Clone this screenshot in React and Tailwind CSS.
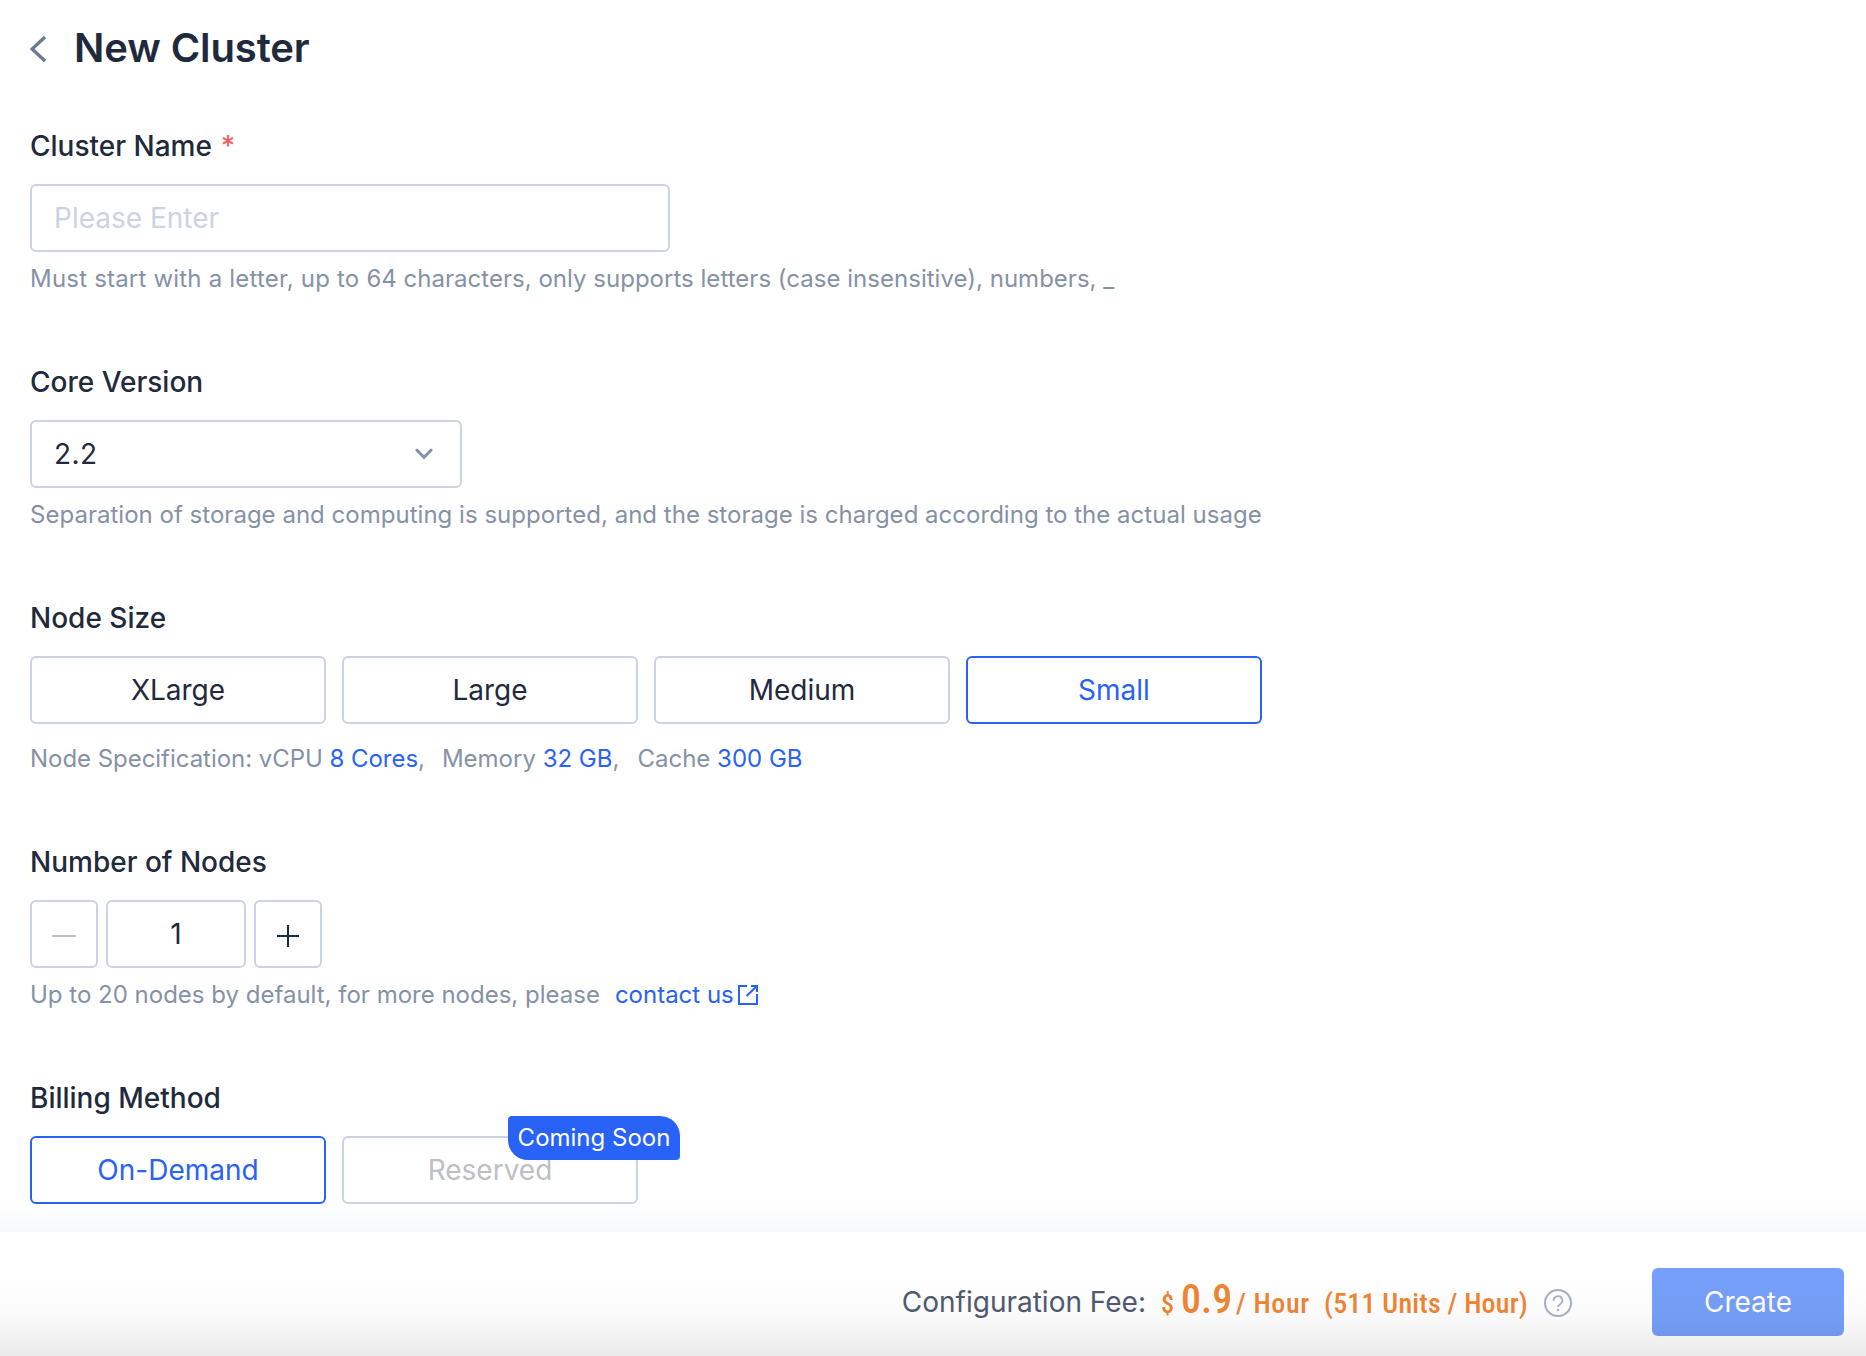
import React from "react";

function Field({ label, required, children, hint, gap = "mt-[12px]" }) {
  return (
    <section>
      <h2 className="flex h-[32px] items-center text-[28px] font-medium text-[#1f2a3d]">
        <span>{label}</span>
        {required && <span className="ml-[9px] font-normal text-[#f15a5a]">*</span>}
      </h2>
      <div className="mt-[22px] flex">{children}</div>
      {hint && (
        <div className={`flex h-[30px] items-center whitespace-pre text-[24px] text-[#8592a6] ${gap}`}>
          {hint}
        </div>
      )}
    </section>
  );
}

const box = "flex h-[68px] items-center rounded-[6px] border-2 text-[28px]";

function Option({ children, active, disabled }) {
  const tone = active
    ? "border-[#2962f6] text-[#2962f6]"
    : disabled
      ? "border-[#cbd3e2] text-[#bdbfc4]"
      : "border-[#cbd3e2] text-[#1f2a3d]";
  return <button className={`${box} w-[296px] justify-center ${tone}`}>{children}</button>;
}

function Value({ children }) {
  return <span className="text-[#2962f6]">{children}</span>;
}

export default function App() {
  return (
    <div className="flex h-[1356px] w-[1866px] flex-col overflow-hidden bg-white font-['Inter',sans-serif]">
      <header className="flex h-[96px] items-center pl-[30px]">
        <svg className="mt-[1px] h-[28px] w-[17px]" viewBox="0 0 17 28" fill="none" stroke="#6b7a8f" strokeWidth="3.2">
          <path d="M15 2 2.200 14 15 26" />
        </svg>
        <h1 className="ml-[27px] text-[40px] font-semibold tracking-[-0.1px] text-[#1f2a3d]">New Cluster</h1>
      </header>

      <main className="flex h-[1136px] flex-col px-[30px] pt-[34px]">
        <div className="h-[236px]">
          <Field
            label="Cluster Name"
            required
            hint={
              <>
                <span className="tracking-[0.2px]">Must start with a letter, up to </span>
                <span className="tracking-[0.02px]">64 characters, only supports letters (case insensitive), numbers, _</span>
              </>
            }
          >
            <div className={`${box} w-[640px] border-[#cbd3e2] px-[22px] text-[#cbd3e2]`}>Please Enter</div>
          </Field>
        </div>
        <div className="h-[236px]">
          <Field
            label="Core Version"
            hint={
              <span className="tracking-[0.02px]">
                Separation of storage and computing is supported, and the storage is charged according to the actual usage
              </span>
            }
          >
            <div className={`${box} w-[432px] justify-between border-[#cbd3e2] pr-[27px] pl-[22px] text-[#1f2a3d]`}>
              <span className="tracking-[0.4px]">2.2</span>
              <svg className="h-[12px] w-[18px]" viewBox="0 0 18 12" fill="none" stroke="#8592a6" strokeWidth="3" strokeLinecap="round">
                <path d="M2 2.200l7 7.200 7-7.200" />
              </svg>
            </div>
          </Field>
        </div>
        <div className="h-[244px]">
          <Field
            label="Node Size"
            gap="mt-[20px]"
            hint={
              <>
                <span className="tracking-[-0.04px]">
                  Node Specification: vCPU <Value>8 Cores</Value>,
                </span>
                <span className="ml-[17px]">
                  Memory <Value>32 GB</Value>,
                </span>
                <span className="ml-[18px]">
                  Cache <Value>300 GB</Value>
                </span>
              </>
            }
          >
            <div className="flex gap-4">
              <Option>XLarge</Option>
              <Option>Large</Option>
              <Option>Medium</Option>
              <Option active>Small</Option>
            </div>
          </Field>
        </div>
        <div className="h-[236px]">
          <Field
            label="Number of Nodes"
            hint={
              <>
                <span>Up to 20 nodes by default, for more nodes, please</span>
                <span className="ml-[15px] text-[#2962f6]">contact us</span>
                <svg className="ml-[3px] h-[22px] w-[22px]" viewBox="0 0 22 22" fill="none" stroke="#2962f6" strokeWidth="2">
                  <path d="M10 2H2v18h18V10M14 2h6v6M20 2 9.500 12" />
                </svg>
              </>
            }
          >
            <div className="flex gap-2">
              <button className={`${box} w-[68px] justify-center border-[#cbd3e2]`}>
                <svg className="mt-[4px] h-[24px] w-[24px]" viewBox="0 0 24 24" stroke="#bdbfc4" strokeWidth="2">
                  <path d="M0 12h24" />
                </svg>
              </button>
              <div className={`${box} w-[140px] justify-center border-[#cbd3e2] text-[#1f2a3d]`}>1</div>
              <button className={`${box} w-[68px] justify-center border-[#cbd3e2]`}>
                <svg className="mt-[4px] h-[24px] w-[24px]" viewBox="0 0 24 24" stroke="#1f2a3d" strokeWidth="2">
                  <path d="M1 12h22M12 1v22" />
                </svg>
              </button>
            </div>
          </Field>
        </div>
        <Field label="Billing Method">
          <div className="flex gap-4">
            <Option active>On-Demand</Option>
            <div className="relative">
              <Option disabled>Reserved</Option>
              <span className="absolute top-[-20px] left-[166px] flex h-[44px] w-[172px] items-center justify-center rounded-tl-[4px] rounded-tr-[20px] rounded-br-[4px] rounded-bl-[20px] bg-[#2962f6] text-[24px] text-white">
                Coming Soon
              </span>
            </div>
          </div>
        </Field>
      </main>

      <footer className="relative flex h-[124px] items-center justify-end bg-white pr-[22px]">
        <div className="pointer-events-none absolute inset-x-0 -top-[30px] h-[30px] bg-linear-to-t from-[#2a5aa0]/4 to-transparent" />
        <span className="mt-[16px] text-[28px] text-[#4f5a70]">Configuration Fee:</span>
        <div className="mt-[12px] ml-[15px] flex w-[367px] items-baseline font-['Roboto',sans-serif] font-medium whitespace-pre text-[#f08433] [font-stretch:75%]">
          <span className="w-[20px] shrink-0 text-[26px]">$</span>
          <span className="w-[55px] shrink-0 text-[40px]">0.9</span>
          <span className="w-[88px] shrink-0 text-[28px] tracking-[0.6px]">/ Hour</span>
          <span className="shrink-0 text-[28px] tracking-[0.2px]">(511 Units / Hour)</span>
        </div>
        <svg className="mt-[18px] ml-[16px] h-[28px] w-[28px]" viewBox="0 0 28 28" fill="none" stroke="#a7b1c4" strokeWidth="2">
          <circle cx="14" cy="14" r="13" />
          <path d="M9.700 11.700a4.300 4.300 0 1 1 6.600 3.400c-1.500 1-2.300 1.500-2.300 3" strokeWidth="1.800" />
          <circle cx="14" cy="21" r="1.200" fill="#a7b1c4" stroke="none" />
        </svg>
        <button className="mt-[16px] ml-[80px] flex h-[68px] w-[192px] items-center justify-center rounded-[6px] bg-[#769ff9] text-[28px] text-white">
          Create
        </button>
        <div className="pointer-events-none absolute inset-x-0 bottom-0 h-[80px] bg-linear-to-t from-black/8 via-black/2 to-transparent" />
      </footer>
    </div>
  );
}
